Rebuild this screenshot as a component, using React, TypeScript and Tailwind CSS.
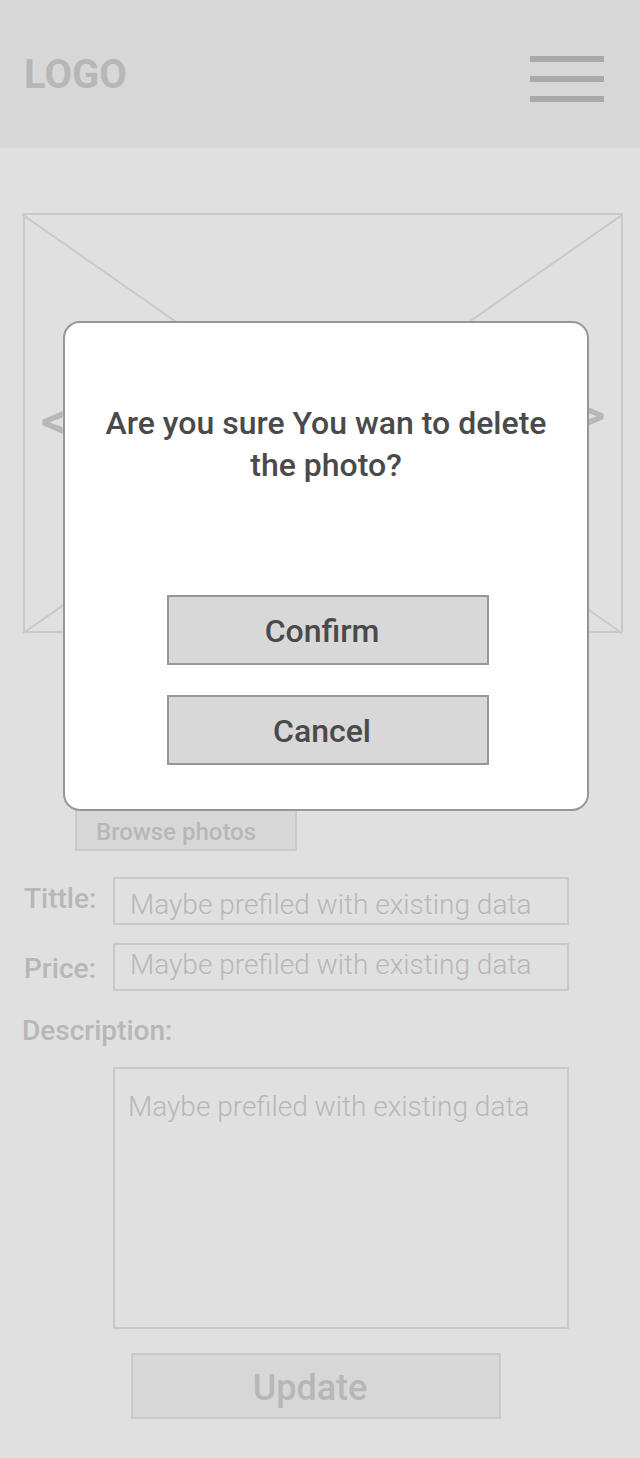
import type { ReactNode } from "react";

const PREFILLED = "Maybe prefiled with existing data";

function Header() {
  return (
    <header className="flex h-[148px] items-center justify-between bg-[#d7d7d7] pr-9 pl-6">
      <a href="#" className="pt-0.5 text-[40px] leading-[48px] font-bold text-[#b7b7b7]">
        LOGO
      </a>
      <button type="button" aria-label="Menu" className="mt-2.5 flex w-[74px] flex-col gap-3.5">
        <span className="h-1.5 w-full bg-[#a9a9a9]" />
        <span className="h-1.5 w-full bg-[#a9a9a9]" />
        <span className="h-1.5 w-full bg-[#a9a9a9]" />
      </button>
    </header>
  );
}

function PhotoCarousel() {
  return (
    <section
      aria-label="Photos"
      className="relative mr-[17px] ml-[23px] flex h-[420px] items-center justify-between border-2 border-[#c9c9c9] px-4 text-5xl font-bold text-[#b7b7b7]"
    >
      <svg
        className="absolute -inset-0.5 h-[420px] w-[calc(100%+4px)]"
        viewBox="0 0 600 420"
        preserveAspectRatio="none"
        fill="none"
        stroke="#c9c9c9"
        strokeWidth="2"
        strokeLinecap="square"
        overflow="visible"
        aria-hidden="true"
      >
        <path d="M0 2 598 419.5M599 2 1 419.5" vectorEffect="non-scaling-stroke" />
      </svg>
      <button type="button" aria-label="Previous photo" className="relative pb-1">
        &lt;
      </button>
      <button type="button" aria-label="Next photo" className="relative pb-4">
        &gt;
      </button>
    </section>
  );
}

function FieldLabel({ htmlFor, children }: { htmlFor: string; children: ReactNode }) {
  return (
    <label
      htmlFor={htmlFor}
      className="w-[89px] shrink-0 text-[28px] leading-8 font-medium text-[#b7b7b7]"
    >
      {children}
    </label>
  );
}

function EditForm() {
  return (
    <form className="flex flex-col pr-[71px] pl-6" onSubmit={(e) => e.preventDefault()}>
      <button
        type="button"
        className="ml-[51px] h-[42px] w-[222px] border-2 border-[#c9c9c9] bg-[#d7d7d7] pt-1 pl-[19px] text-left text-2xl font-medium text-[#b7b7b7]"
      >
        Browse photos
      </button>

      <div className="mt-[26px] flex items-start">
        <div className="flex pt-1.5">
          <FieldLabel htmlFor="title">Tittle:</FieldLabel>
        </div>
        <input
          id="title"
          defaultValue={PREFILLED}
          className="h-12 min-w-0 flex-1 border-2 border-[#c9c9c9] bg-transparent px-[15px] pt-1.5 text-[28px] font-light text-[#b7b7b7] outline-none"
        />
      </div>

      <div className="mt-[18px] flex items-start">
        <div className="flex pt-2.5">
          <FieldLabel htmlFor="price">Price:</FieldLabel>
        </div>
        <input
          id="price"
          defaultValue={PREFILLED}
          className="h-12 min-w-0 flex-1 border-2 border-[#c9c9c9] bg-transparent px-[15px] pb-1.5 text-[28px] font-light text-[#b7b7b7] outline-none"
        />
      </div>

      <label
        htmlFor="description"
        className="mt-6 -ml-0.5 text-[28px] leading-8 font-medium text-[#b7b7b7]"
      >
        Description:
      </label>
      <textarea
        id="description"
        defaultValue={PREFILLED}
        className="mt-5 ml-[89px] h-[262px] resize-none border-2 border-[#c9c9c9] bg-transparent px-[13px] py-[22px] text-[28px] leading-8 font-light text-[#b7b7b7] outline-none"
      />

      <button
        type="submit"
        className="mt-6 ml-[107px] h-[66px] w-[370px] border-2 border-[#c9c9c9] bg-[#d7d7d7] pt-1 pr-3 text-4xl font-medium text-[#b7b7b7]"
      >
        Update
      </button>
    </form>
  );
}

function ModalButton({ children }: { children: ReactNode }) {
  return (
    <button
      type="button"
      className="h-[70px] w-[322px] border-2 border-[#979797] bg-[#d8d8d8] pt-0.5 pr-3 text-[32px] font-medium"
    >
      {children}
    </button>
  );
}

function DeleteDialog() {
  return (
    <div className="absolute inset-x-0 top-[321px] pr-[51px] pl-[63px]">
      <div
        role="dialog"
        aria-modal="true"
        aria-labelledby="delete-question"
        className="flex flex-col items-center rounded-[17px] border-2 border-[#979797] bg-white pt-[79px] pb-11 text-[#4a4a4a]"
      >
        <h1
          id="delete-question"
          className="px-9 text-center text-[32px] leading-[42px] font-medium"
        >
          Are you sure You wan to delete the photo?
        </h1>
        <div className="mt-[109px] flex flex-col gap-[30px] pl-1">
          <ModalButton>Confirm</ModalButton>
          <ModalButton>Cancel</ModalButton>
        </div>
      </div>
    </div>
  );
}

export default function App() {
  return (
    <div className="relative min-h-screen bg-[#e0e0e0] pb-[39px] font-['Roboto',sans-serif]">
      <Header />
      <main className="flex flex-col gap-44 pt-[65px]">
        <PhotoCarousel />
        <EditForm />
      </main>
      <DeleteDialog />
    </div>
  );
}
